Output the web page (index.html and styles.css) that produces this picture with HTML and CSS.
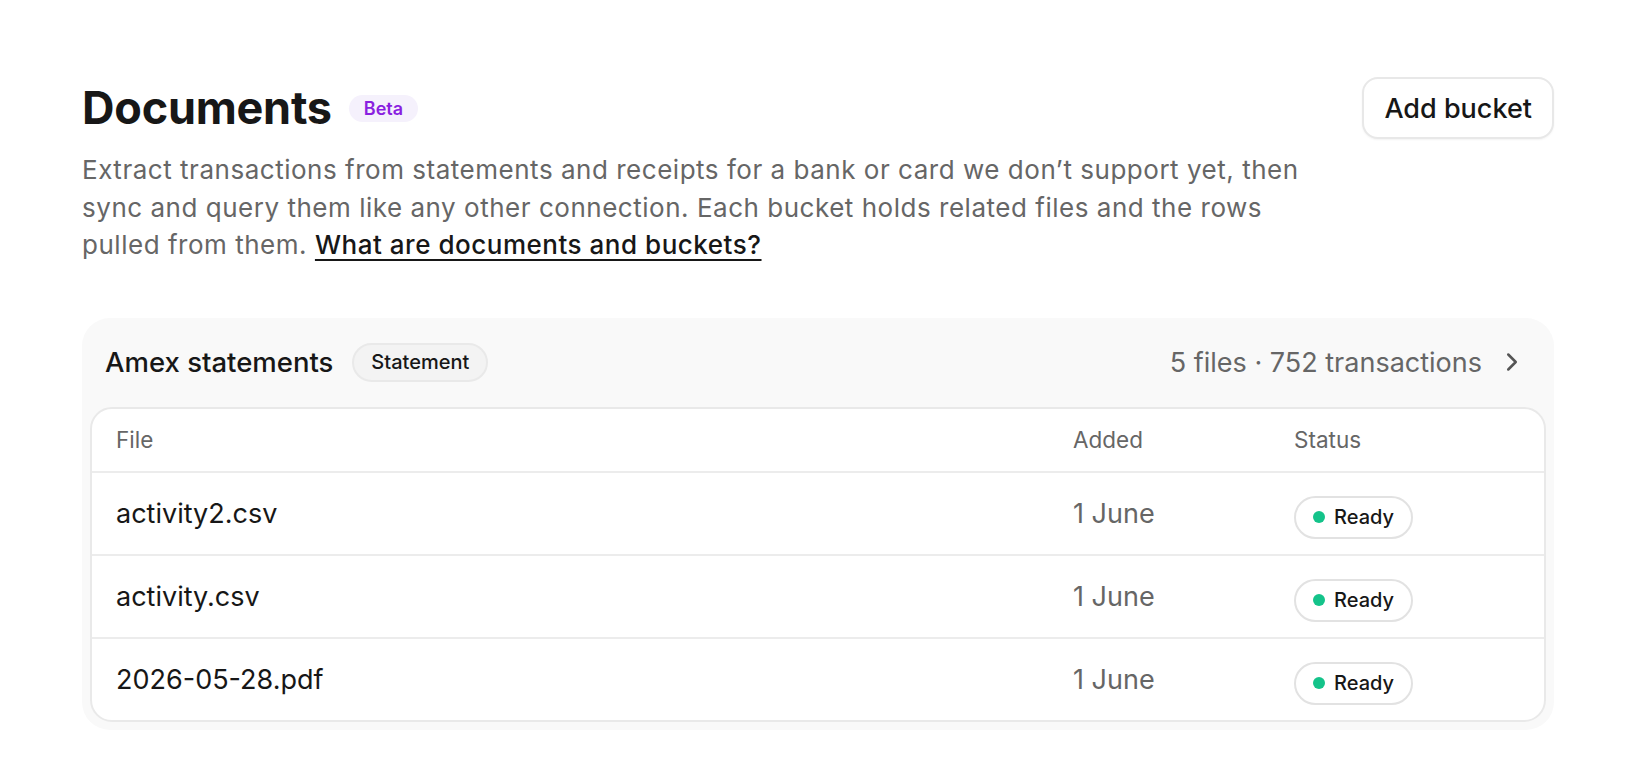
FILE: index.html
```html
<!DOCTYPE html>
<html lang="en">
<head>
<meta charset="utf-8">
<title>Documents</title>
<link rel="stylesheet" href="styles.css">
</head>
<body>
<main class="page">
  <div class="head-row">
    <div class="title-wrap">
      <h1 class="title">Documents</h1>
      <span class="beta">Beta</span>
    </div>
    <button class="btn">Add bucket</button>
  </div>
  <p class="desc">Extract transactions from statements and receipts for a bank or card we don’t support yet, then sync and query them like any other connection. Each bucket holds related files and the rows pulled from them. <a class="link" href="#">What are documents and buckets?</a></p>

  <section class="card">
    <div class="card-head">
      <div class="card-title-wrap">
        <span class="card-title">Amex statements</span>
        <span class="tag">Statement</span>
      </div>
      <div class="card-meta">
        <span class="meta-text">5 files · 752 transactions</span>
        <svg class="chev" viewBox="0 0 24 24" fill="none" stroke="currentColor" stroke-width="2" stroke-linecap="round" stroke-linejoin="round"><path d="m9 18 6-6-6-6"/></svg>
      </div>
    </div>
    <div class="table">
      <div class="row thead">
        <div class="cell">File</div>
        <div class="cell">Added</div>
        <div class="cell">Status</div>
      </div>
      <div class="row">
        <div class="cell file">activity2.csv</div>
        <div class="cell date">1 June</div>
        <div class="cell"><span class="status"><span class="dot"></span>Ready</span></div>
      </div>
      <div class="row">
        <div class="cell file">activity.csv</div>
        <div class="cell date">1 June</div>
        <div class="cell"><span class="status"><span class="dot"></span>Ready</span></div>
      </div>
      <div class="row">
        <div class="cell file">2026-05-28.pdf</div>
        <div class="cell date">1 June</div>
        <div class="cell"><span class="status"><span class="dot"></span>Ready</span></div>
      </div>
    </div>
  </section>
</main>
</body>
</html>
```
FILE: styles.css
```css
* { box-sizing: border-box; }
html, body { margin: 0; background: #fff; }
body {
  font-family: Inter, "Noto Sans", "Liberation Sans", sans-serif;
  color: #171717;
  overflow: hidden;
}
.page {
  padding: 77px 82px 0 82px;
}
.head-row {
  display: flex;
  justify-content: space-between;
  align-items: center;
}
.title-wrap {
  display: flex;
  align-items: center;
  gap: 17px;
}
.title {
  margin: 0;
  font-size: 45px;
  line-height: 54px;
  font-weight: 700;
  letter-spacing: -0.005em;
  color: #171717;
}
.beta {
  display: inline-flex;
  align-items: center;
  height: 27px;
  padding: 0 15px;
  border-radius: 999px;
  background: #f5f1fc;
  color: #8a1fe0;
  font-size: 18px;
  font-weight: 600;
}
.btn {
  height: 62px;
  padding: 0 20px;
  font-family: inherit;
  font-size: 27px;
  font-weight: 500;
  color: #171717;
  background: #fff;
  border: 2px solid #e8e8e8;
  border-radius: 16px;
  box-shadow: 0 1px 2px rgba(0,0,0,0.05);
}
.desc {
  margin: 12px 0 0;
  max-width: 1240px;
  font-size: 26px;
  line-height: 37.5px;
  letter-spacing: 0.02em;
  color: #666;
}
.link {
  color: #171717;
  font-weight: 500;
  text-decoration: underline;
  text-decoration-thickness: 2px;
  text-underline-offset: 5px;
}
.card {
  margin-top: 54px;
  background: #f9f9f9;
  border-radius: 28px;
  padding: 0 8px 8px;
}
.card-head {
  height: 89px;
  display: flex;
  align-items: center;
  justify-content: space-between;
  padding: 0 19px 0 15px;
}
.card-title-wrap {
  display: flex;
  align-items: center;
  gap: 19px;
}
.card-title {
  font-size: 27.5px;
  font-weight: 500;
  color: #171717;
}
.tag {
  display: inline-flex;
  align-items: center;
  height: 39px;
  padding: 0 17px;
  border-radius: 999px;
  border: 2px solid #e9e9e9;
  background: #f3f3f3;
  font-size: 20px;
  font-weight: 500;
  color: #171717;
}
.card-meta {
  display: flex;
  align-items: center;
  gap: 15px;
}
.meta-text {
  font-size: 27px;
  color: #666;
}
.chev {
  width: 30px;
  height: 30px;
  color: #555;
}
.table {
  background: #fff;
  border: 2px solid #e9e9e9;
  border-radius: 22px;
  overflow: hidden;
}
.row {
  display: grid;
  grid-template-columns: 1fr 221px 274px;
  align-items: center;
  height: 83px;
  border-bottom: 2px solid #ececec;
}
.row:last-child { border-bottom: 0; height: 81px; }
.thead { height: 64px; }
.cell {
  padding-left: 24px;
  display: flex;
  align-items: center;
}
.thead .cell {
  font-size: 22.5px;
  color: #666;
}
.file {
  font-size: 27px;
  color: #171717;
}
.date {
  font-size: 27px;
  color: #666;
}
.status {
  display: inline-flex;
  align-items: center;
  gap: 9px;
  height: 43px;
  margin-top: 8px;
  padding: 0 17px;
  border: 2px solid #e2e2e2;
  border-radius: 999px;
  background: #fff;
  font-size: 20px;
  font-weight: 500;
  color: #171717;
}
.dot {
  width: 12px;
  height: 12px;
  border-radius: 50%;
  background: #14c38a;
}
```
